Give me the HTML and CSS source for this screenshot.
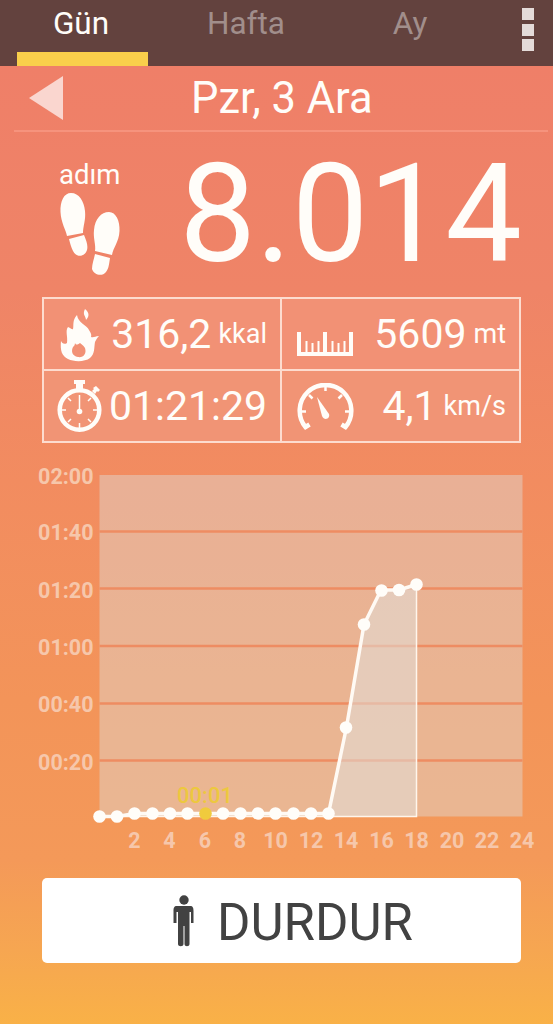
FILE: index.html
```
<!DOCTYPE html>
<html lang="tr">
<head>
    <meta charset="UTF-8">
    <meta name="viewport" content="width=device-width, initial-scale=1.0">
    <title>Adım Sayar</title>
    <link rel="stylesheet" href="styles.css">
</head>
<body>
    <header class="tabs">
        <div class="tab active"><span>Gün</span></div>
        <div class="tab"><span>Hafta</span></div>
        <div class="tab"><span>Ay</span></div>
        <div class="menu"><i></i><i></i><i></i></div>
    </header>

    <div class="date-bar">
        <svg class="prev" width="34" height="44" viewBox="0 0 34 44"><path d="M0 22L34 0V44Z"/></svg>
        <h1>Pzr, 3 Ara</h1>
    </div>

    <section class="steps">
        <div class="steps-label">
            <span>adım</span>
            <svg width="60" height="83" viewBox="0 0 60 83">
                <path d="M11 0C19 0 24 8 25 18C26 27 23 33 23 40L7 43C6 37 1 30 .5 19C0 8 4 0 11 0Z"/>
                <path d="M9 46L24 42C27 49 28 53 27 57C25 64 16 65 13 58C11 54 10 50 9 46Z"/>
                <path d="M49 19C56 19 60 28 59.5 38C59 49 53 55 52 62L35 58C36 52 33 45 34 37C35 26 41 19 49 19Z"/>
                <path d="M35 61L50 65C49 71 49 75 46 79C42 84 34 82 32 76C32 71 34 66 35 61Z"/>
            </svg>
        </div>
        <div class="steps-count">8.014</div>
    </section>

    <section class="stats">
        <div class="stat">
            <svg class="flame" width="40" height="54" viewBox="0 0 40 54">
                <path fill-rule="evenodd" d="M17 6C12 11 14 17 13 20C12 21 11 19 8 18C5 22 8 27 7 34C4 36 2 34 1 32C0 42 2 47 8 50C14 53 25 53 30 49C35 45 34 38 35 33C36 31 37 29 39 27C35 27 34 29 31 28C32 25 30 23 29 21C27 16 18 14 17 6ZM15 34C16 36 17 36 20 34C21 35 23 36 25 39C27 45 23 49 18 48C12 47 11 42 13 38C14 37 15 36 15 34Z"/>
                <path d="M25 0C30 4 29 8 26 11C26 7 22 6 25 0Z"/>
            </svg>
            <b>316,2</b><small>kkal</small>
        </div>
        <div class="stat">
            <svg class="ruler" width="57" height="25" viewBox="0 0 57 25">
                <path d="M0 0H4V20H26V0H30V20H52V0H56V24H0ZM8.500 9H10.500V20H8.500ZM14.500 11H16.500V20H14.500ZM20.500 9H22.500V20H20.500ZM34.500 9H36.500V20H34.500ZM40.500 11H42.500V20H40.500ZM46.500 9H48.500V20H46.500Z"/>
            </svg>
            <b>5609</b><small>mt</small>
        </div>
        <div class="stat">
            <svg class="watch" width="46" height="53" viewBox="0 0 46 53">
                <path d="M17 0H28V4H26V9H19V4H17Z"/>
                <path d="M35 11L37 9L36 8L39 6L43 10L41 12L40 11L38 14Z"/>
                <circle class="line" cx="22.500" cy="30" r="19.800"/>
                <path class="tick" d="M22.500 15V29M22.500 43V49M4 30H9M36 30H41M11 18L14 21M11 42L14 39M34 42L31 39M34 18L31 21"/>
                <circle cx="22.500" cy="31.500" r="2.800"/>
            </svg>
            <b>01:21:29</b>
        </div>
        <div class="stat">
            <svg class="gauge" width="57" height="47" viewBox="0 0 57 47">
                <path class="line" d="M12.500 41.500L8.500 44A25.800 25.800 0 1 1 48.500 44L44.500 41.500"/>
                <path class="tick thick" d="M28.500 3V8M12 12L15.500 15.500M45 12L41.500 15.500M4 28.500H9M48 28.500H53"/>
                <path d="M20 14L32 31C33.500 36 27 38 25 33Z"/>
            </svg>
            <b>4,1</b><small>km/s</small>
        </div>
    </section>

    <svg class="chart" width="553" height="415" viewBox="0 455 553 415">
        <rect class="plot" x="99.500" y="475" width="423" height="341.500"/>
        <path class="grid" d="M99.500 531.500H522.500M99.500 588.500H522.500M99.500 646H522.500M99.500 703.500H522.500M99.500 760.500H522.500"/>
        <path class="area" d="M99.500 816.500H117.500L134.500 813.500H328.500L346.500 727L364 624.500L381 590L399 590L416.500 584.500V816.500Z"/>
        <polyline class="curve" points="99.500,816.500 117.500,816.500 134.500,813.500 328.500,813.500 346.500,727 364,624.500 381,590 399,590 416.500,584.500"/>
        <g class="dots">
            <circle cx="99.500" cy="816.500" r="6.300"/>
            <circle cx="117" cy="816.500" r="6.300"/>
            <circle cx="134.500" cy="813.500" r="6.300"/>
            <circle cx="152.500" cy="813.500" r="6.300"/>
            <circle cx="170" cy="813.500" r="6.300"/>
            <circle cx="187.500" cy="813.500" r="6.300"/>
            <circle class="selected" cx="205.500" cy="813.500" r="6.300"/>
            <circle cx="223" cy="813.500" r="6.300"/>
            <circle cx="240.500" cy="813.500" r="6.300"/>
            <circle cx="258" cy="813.500" r="6.300"/>
            <circle cx="275.500" cy="813.500" r="6.300"/>
            <circle cx="293.500" cy="813.500" r="6.300"/>
            <circle cx="311" cy="813.500" r="6.300"/>
            <circle cx="328.500" cy="813.500" r="6.300"/>
            <circle cx="346" cy="727.500" r="6.300"/>
            <circle cx="364" cy="624.500" r="6.300"/>
            <circle cx="381.500" cy="590.500" r="6.300"/>
            <circle cx="399" cy="590" r="6.300"/>
            <circle cx="416.500" cy="584.500" r="6.300"/>
        </g>
        <text class="value" x="205" y="803">00:01</text>
        <g class="durations">
            <text x="93.500" y="483.500">02:00</text>
            <text x="93.500" y="540">01:40</text>
            <text x="93.500" y="597.500">01:20</text>
            <text x="93.500" y="655">01:00</text>
            <text x="93.500" y="712">00:40</text>
            <text x="93.500" y="769.500">00:20</text>
        </g>
        <g class="hours">
            <text x="134.500" y="848">2</text>
            <text x="169.500" y="848">4</text>
            <text x="205" y="848">6</text>
            <text x="240" y="848">8</text>
            <text x="275.500" y="848">10</text>
            <text x="311" y="848">12</text>
            <text x="346" y="848">14</text>
            <text x="381.500" y="848">16</text>
            <text x="416.500" y="848">18</text>
            <text x="452" y="848">20</text>
            <text x="487" y="848">22</text>
            <text x="522" y="848">24</text>
        </g>
    </svg>

    <button class="stop">
        <svg width="21" height="52" viewBox="0 0 21 52">
            <circle cx="11" cy="5" r="4.700"/>
            <path d="M4 11H17C20 11 20.500 13 20.500 16V28H18V17H16.500V49C16.500 52 11.500 52 11.500 49V31H10.500V49C10.500 52 5 52 5 49V17H3.500V28H.5V16C.5 13 1 11 4 11Z"/>
        </svg>
        <span>DURDUR</span>
    </button>
</body>
</html>
```
FILE: styles.css
```
* {
    box-sizing: border-box;
}
body {
    margin: 0;
    height: 1024px;
    overflow: hidden;
    font-family: Roboto, sans-serif;
    color: #fffdf9;
    background: linear-gradient(#ef7f68 66px, #ef8467 290px, #f28c60 480px, #f39459 700px, #f49959 860px, #f6a651 950px, #f9b147 1024px);
}
svg {
    display: block;
    flex-shrink: 0;
    fill: #fffdf9;
}
.tabs {
    display: flex;
    height: 66px;
    background-color: #63423e;
}
.tab {
    width: 164px;
    padding: 0 16px;
    font-size: 31.500px;
    line-height: 47px;
    text-align: center;
    color: #a18e8b;
}
.tab.active {
    padding: 0 16px 0 17px;
    color: #fffdf9;
}
.tab.active span {
    margin-right: 3px;
}
.tab.active::after {
    content: "";
    display: block;
    height: 14px;
    margin-top: 5px;
    background-color: #f9cf4b;
}
.menu {
    display: flex;
    flex-direction: column;
    gap: 3.500px;
    padding: 8px 0 0 30px;
}
.menu i {
    width: 12px;
    height: 12px;
    background-color: #e4dbd9;
}
.date-bar {
    display: flex;
    height: 66px;
    margin: 0 5px 0 14px;
    padding: 10px 0 0 15px;
    border-bottom: 2px solid #f6937d;
}
.prev {
    fill: #fad6cf;
}
.date-bar h1 {
    margin: -3px 0 0 128px;
    font-size: 43.500px;
    font-weight: 400;
    line-height: 52px;
}
.steps {
    display: flex;
    justify-content: space-between;
    height: 165px;
    padding: 27px 31px 0 59px;
}
.steps-label {
    font-size: 27.500px;
    line-height: 32px;
}
.steps-label svg {
    margin: 2px 0 0 1px;
}
.steps-count {
    font-size: 136.500px;
    line-height: 110px;
}
.stats {
    display: grid;
    grid-template-columns: 236px 237px;
    grid-template-rows: 70px 70px;
    gap: 2px;
    width: 479px;
    height: 146px;
    margin-left: 42px;
    border: 2px solid #fddccf;
    background-color: #fddccf;
}
.stat {
    display: flex;
    align-items: center;
    padding: 0 13px 0 15px;
    background-color: #f29175;
}
.stat:nth-child(n+3) {
    background-color: #f19475;
}
.stat b {
    margin-left: auto;
    font-size: 41px;
    font-weight: 400;
    line-height: 48px;
}
.stat small {
    margin-left: 7px;
    font-size: 27px;
}
.flame {
    margin: 3px 0 0 1px;
}
.ruler {
    margin-top: 20px;
}
.watch {
    margin-left: -2px;
}
.line, .tick {
    fill: none;
    stroke: #fffdf9;
    stroke-width: 4.500;
}
.tick {
    stroke-width: 1.500;
}
.thick {
    stroke-width: 2.500;
}
.chart {
    margin-top: 12px;
}
.plot {
    fill: #e0d8d2;
    fill-opacity: .47;
}
.grid {
    fill: none;
    stroke: #ee8c62;
    stroke-width: 2.500;
}
.area {
    fill: #e1dfd9;
    fill-opacity: .55;
    stroke: #fff5ec;
    stroke-width: 1.500;
}
.curve {
    fill: none;
    stroke: #fffaf4;
    stroke-width: 3.500;
}
.selected {
    fill: #f0cb3d;
}
.value {
    font-size: 22px;
    font-weight: 500;
    text-anchor: middle;
    fill: #edc83f;
}
.durations, .hours {
    font-size: 21.500px;
    font-weight: 700;
    fill: #f6c7ab;
}
.durations {
    text-anchor: end;
}
.hours {
    text-anchor: middle;
}
.stop {
    display: flex;
    align-items: center;
    gap: 23px;
    width: 479px;
    height: 85px;
    margin: 8px 0 0 42px;
    padding: 0 0 0 131px;
    border: none;
    border-radius: 5px;
    background-color: #fff;
    font-family: inherit;
    font-size: 51px;
    color: #424242;
}
.stop svg {
    fill: #424242;
}
.stop span {
    margin-top: 3px;
}
```
